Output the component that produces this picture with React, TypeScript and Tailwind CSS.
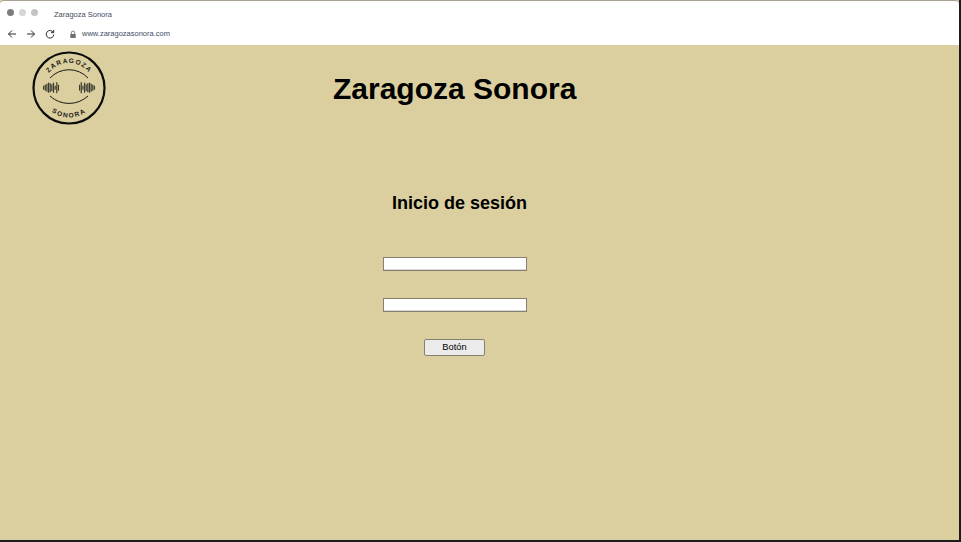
import React from 'react'

const Logo = () => {
  const left = [4, 6, 8, 10, 9, 7, 10, 4, 11, 6]
  const right = [6, 11, 4, 10, 7, 9, 10, 8, 6, 4]
  return (
    <svg width="74" height="74" viewBox="0 0 74 74" className="shrink-0">
      <defs>
        <path id="logo-top" d="M 12 37 A 25 25 0 0 1 62 37" />
        <path id="logo-bottom" d="M 7.5 37 A 29.5 29.5 0 0 0 66.5 37" />
      </defs>
      <circle cx="37" cy="37" r="35.5" fill="none" stroke="#0c0c0a" strokeWidth="2.2" />
      <text fontFamily="'Liberation Sans', sans-serif" fontSize="6.6" fontWeight="700" letterSpacing="1.1" fill="#1a1a16">
        <textPath href="#logo-top" startOffset="50%" textAnchor="middle">ZARAGOZA</textPath>
      </text>
      <text fontFamily="'Liberation Sans', sans-serif" fontSize="6.6" fontWeight="700" letterSpacing="1.4" fill="#1a1a16">
        <textPath href="#logo-bottom" startOffset="50%" textAnchor="middle">SONORA</textPath>
      </text>
      <path d="M 18 27 A 26 26 0 0 1 56 27" fill="none" stroke="#1a1a16" strokeWidth="1" />
      <path d="M 18 45 A 28 28 0 0 0 56 45" fill="none" stroke="#1a1a16" strokeWidth="1" />
      {left.map((h, i) => (
        <rect key={i} x={11 + i * 1.65} y={36.7 - h / 2} width="1.2" height={h} fill="#3a3a32" />
      ))}
      {right.map((h, i) => (
        <rect key={i} x={47 + i * 1.65} y={36.7 - h / 2} width="1.2" height={h} fill="#3a3a32" />
      ))}
    </svg>
  )
}

const BrowserBar = () => (
  <div className="h-[45px] bg-white shrink-0 border-t border-[#a8a294] rounded-t-[4px] pl-[7px] flex flex-col">
    <div className="flex items-center h-[22px] pt-[1px]">
      <div className="flex gap-[5px]">
        <span className="w-[7px] h-[7px] rounded-full bg-[#7d7d7d]" />
        <span className="w-[7px] h-[7px] rounded-full bg-[#d6d6d6]" />
        <span className="w-[7px] h-[7px] rounded-full bg-[#c4c4c4]" />
      </div>
      <span className="ml-[16px] mt-[5px] text-[7.5px] text-[#3f4a5e]">Zaragoza Sonora</span>
    </div>
    <div className="flex items-center h-[22px]">
      <svg width="10" height="10" viewBox="0 0 10 10" fill="none" stroke="#2b2b2b" strokeWidth="1">
        <path d="M9 5H1.5M5 1.5L1.5 5L5 8.5" />
      </svg>
      <svg className="ml-[9px]" width="10" height="10" viewBox="0 0 10 10" fill="none" stroke="#2b2b2b" strokeWidth="1">
        <path d="M1 5H8.5M5 1.5L8.5 5L5 8.5" />
      </svg>
      <svg className="ml-[9px]" width="10" height="10" viewBox="0 0 10 10" fill="none" stroke="#2b2b2b" strokeWidth="1">
        <path d="M8.3 3.4A3.8 3.8 0 1 0 8.8 5.6" />
        <path d="M8.7 1V3.7H6" />
      </svg>
      <svg className="ml-[14px]" width="8" height="9" viewBox="0 0 8 9">
        <path d="M2.3 4V2.8a1.7 1.7 0 0 1 3.4 0V4" fill="none" stroke="#6f6f6f" strokeWidth="0.9" />
        <rect x="1.3" y="4" width="5.4" height="4" rx="0.6" fill="#6f6f6f" />
      </svg>
      <span className="ml-[5px] text-[7.5px] text-[#3d4d66]">www.zaragozasonora.com</span>
    </div>
  </div>
)

export default function App() {
  return (
    <div className="w-[961px] h-[542px] bg-[#1c1c1c] pr-[2px] pb-[2px] font-['Liberation_Sans',Arial,sans-serif]">
      <div className="h-full flex flex-col bg-[#dccf9f]">
        <BrowserBar />
        <header className="flex items-start h-[86px] pl-[32px] pt-[6px]">
          <Logo />
          <h1 className="ml-[227px] mt-[19px] text-[30px] leading-[37px] font-bold text-black whitespace-nowrap">
            Zaragoza Sonora
          </h1>
        </header>
        <main className="w-[910px] flex flex-col items-center">
          <h2 className="mt-[61px] ml-[9px] text-[18px] leading-[22px] font-bold text-black">Inicio de sesión</h2>
          <form className="flex flex-col items-center mt-[43px]">
            <input type="text" className="w-[144.5px] h-[14px] bg-white border border-[#85806f] shadow-[inset_0_-1px_0_#d8d8d8] outline-none" />
            <input type="password" className="w-[144.5px] h-[14px] mt-[27px] bg-white border border-[#85806f] shadow-[inset_0_-1px_0_#d8d8d8] outline-none" />
            <button type="button" className="w-[61px] h-[17px] mt-[27px] -ml-[1px] bg-[#ebebeb] border border-[#85806f] rounded-[2px] text-[9.3px] leading-none text-black">
              Botón
            </button>
          </form>
        </main>
      </div>
    </div>
  )
}
